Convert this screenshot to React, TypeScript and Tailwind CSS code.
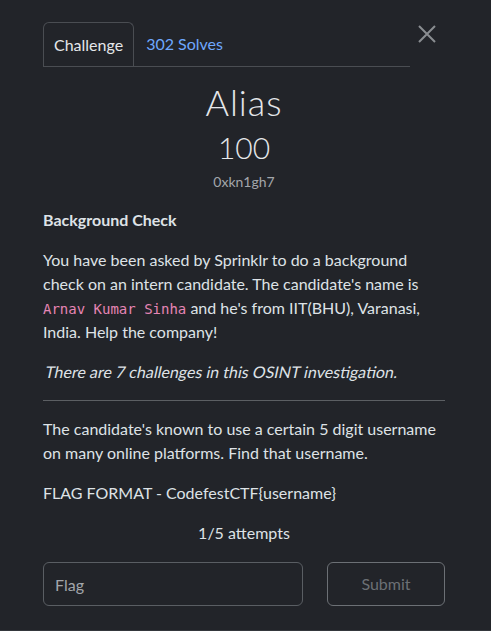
import React from 'react';

const App: React.FC = () => {
  return (
    <div
      className="w-full h-[631px] bg-[#222429] text-[#dee2e6] pl-[43px] pr-[46px] border-b border-[#34373c] overflow-hidden"
      style={{ fontFamily: 'Lato, "Open Sans", sans-serif' }}
    >
      {/* Header with tabs */}
      <div className="flex pt-[22px]">
        <div className="flex w-[367px] border-b border-[#4a4d52]">
          <div className="h-[44px] px-[10px] flex items-center border border-[#4a4d52] border-b-0 rounded-t-md bg-[#222429] -mb-px text-[16px] text-[#e5e7ea]">
            Challenge
          </div>
          <div className="h-[44px] px-[12px] flex items-center text-[16px] text-[#6ea8fe]">
            302 Solves
          </div>
        </div>
        <button className="flex-1 flex justify-end pt-[3px]">
          <svg width="18" height="18" viewBox="0 0 18 18" className="mr-[9px]">
            <path d="M1 1 L17 17 M17 1 L1 17" stroke="#8a8d91" strokeWidth="2" />
          </svg>
        </button>
      </div>

      {/* Title */}
      <div className="text-center mt-[15px]">
        <h1 className="text-[36px] leading-[40px] font-light tracking-[1px] text-[#e5e7ea]">Alias</h1>
        <h2 className="text-[30px] leading-[34px] mt-[8px] font-light text-[#e5e7ea]">100</h2>
        <p className="text-[14px] leading-[20px] mt-[8px] text-[#a2a6ab]">0xkn1gh7</p>
      </div>

      {/* Description */}
      <div className="text-[16px] leading-[24px]">
        <p className="font-bold mt-[16px]">Background Check</p>
        <p className="mt-[16px]">
          You have been asked by Sprinklr to do a background check on an intern candidate. The
          candidate's name is{' '}
          <code
            className="text-[14px] leading-[20px] text-[#e685b5]"
            style={{ fontFamily: '"DejaVu Sans Mono", "Liberation Mono", monospace' }}
          >
            Arnav Kumar Sinha
          </code>{' '}
          and he's from IIT(BHU), Varanasi, India. Help the company!
        </p>
        <p className="mt-[16px]">
          <span className="inline-block origin-bottom-left -skew-x-12">
            There are 7 challenges in this OSINT investigation.
          </span>
        </p>
        <hr className="mt-[16px] border-0 border-t border-[#5c5f63]" />
        <p className="mt-[16px]">
          The candidate's known to use a certain 5 digit username on many online platforms. Find
          that username.
        </p>
        <p className="mt-[16px]">FLAG FORMAT - CodefestCTF{'{'}username{'}'}</p>
        <p className="mt-[16px] text-center">1/5 attempts</p>
      </div>

      {/* Submit form */}
      <div className="flex justify-between mt-[17px]">
        <input
          type="text"
          placeholder="Flag"
          className="w-[260px] h-[44px] px-[11px] rounded-md border border-[#5a5e63] bg-transparent text-[16px] text-[#dee2e6] placeholder:text-[#a2a6ab] outline-none"
        />
        <button className="w-[118px] h-[44px] rounded-md border border-[#6c7075] text-[16px] text-[#6c7075]">
          Submit
        </button>
      </div>
    </div>
  );
};

export default App;
